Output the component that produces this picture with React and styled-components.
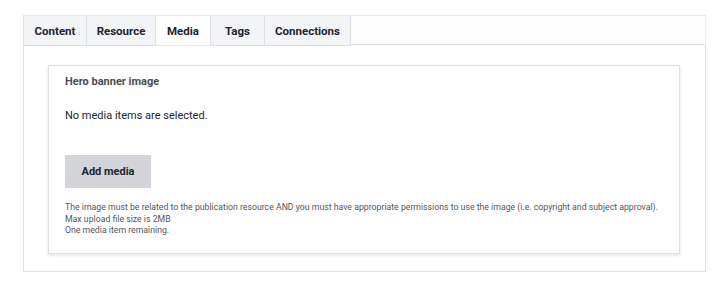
import React, { useState } from 'react';
import styled, { createGlobalStyle } from 'styled-components';

const GlobalStyle = createGlobalStyle`
  body {
    margin: 0;
    background: #ffffff;
    font-family: Roboto, 'Noto Sans', sans-serif;
    color: #222330;
  }
`;

const Page = styled.div`
  padding: 15px 16px 0 23px;
  width: 683px;
`;

const TabBar = styled.div`
  display: flex;
  height: 30px;
  box-sizing: border-box;
  border-top: 1px solid #e6e6ea;
  border-left: 1px solid #dedfe4;
  border-right: 1px solid #f0f0f2;
  background: #fcfcfc;
`;

const Tab = styled.button`
  display: flex;
  align-items: center;
  justify-content: center;
  width: ${(p) => p.$w}px;
  height: 30px;
  box-sizing: border-box;
  padding: 0;
  border: none;
  border-right: 1px solid #dedfe4;
  border-bottom: 1px solid ${(p) => (p.$active ? '#e9e9ed' : '#dedfe4')};
  background: ${(p) => (p.$active ? '#ffffff' : '#f3f4f6')};
  font-family: inherit;
  font-size: 11.5px;
  font-weight: 700;
  color: #222330;
  cursor: pointer;
`;

const TabFill = styled.div`
  flex: 1;
  border-bottom: 1px solid #dedfe4;
`;

const Panel = styled.div`
  border: 1px solid #dedfe4;
  border-top: none;
  padding: 20px 25px 17px 24px;
`;

const Fieldset = styled.section`
  border: 1px solid #dedfe4;
  box-shadow: 0 1px 3px rgba(0, 0, 0, 0.12);
  padding: 9px 16px 16px 16px;
  min-height: 162px;
`;

const Legend = styled.div`
  font-size: 11px;
  font-weight: 700;
  color: #4b4c55;
  line-height: 14px;
`;

const Empty = styled.p`
  margin: 19px 0 0;
  font-size: 11px;
  line-height: 16px;
  color: #222330;
`;

const AddButton = styled.button`
  margin-top: 31px;
  width: 86px;
  height: 33px;
  border: none;
  background: #d3d4d9;
  font-family: inherit;
  font-size: 11px;
  font-weight: 700;
  color: #222330;
  cursor: pointer;
`;

const Help = styled.div`
  margin-top: 14px;
  font-size: 8.72px;
  line-height: 11.5px;
  color: #55565b;
`;

const tabs = [
  { label: 'Content', w: 63 },
  { label: 'Resource', w: 69 },
  { label: 'Media', w: 55 },
  { label: 'Tags', w: 54 },
  { label: 'Connections', w: 86 },
];

export default function App() {
  const [active, setActive] = useState('Media');

  return (
    <Page>
      <GlobalStyle />
      <TabBar>
        {tabs.map((t) => (
          <Tab key={t.label} $w={t.w} $active={active === t.label} onClick={() => setActive(t.label)}>
            {t.label}
          </Tab>
        ))}
        <TabFill />
      </TabBar>
      <Panel>
        <Fieldset>
          <Legend>Hero banner image</Legend>
          <Empty>No media items are selected.</Empty>
          <AddButton>Add media</AddButton>
          <Help>
            The image must be related to the publication resource AND you must have appropriate permissions to use the image (i.e. copyright and subject approval).
            <br />
            Max upload file size is 2MB
            <br />
            One media item remaining.
          </Help>
        </Fieldset>
      </Panel>
    </Page>
  );
}
